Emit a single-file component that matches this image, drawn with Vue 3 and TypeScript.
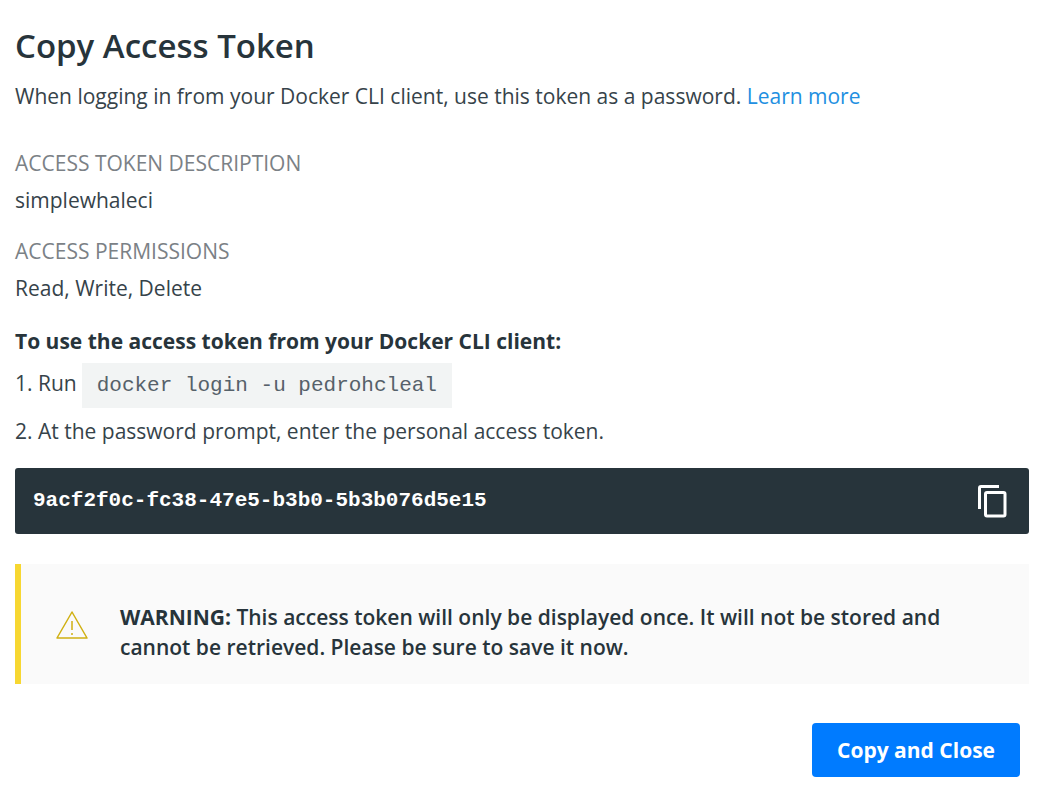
<script setup lang="ts">
import { ref } from 'vue'

const token = ref('9acf2f0c-fc38-47e5-b3b0-5b3b076d5e15')
const details = [
  { label: 'ACCESS TOKEN DESCRIPTION', value: 'simplewhaleci' },
  { label: 'ACCESS PERMISSIONS', value: 'Read, Write, Delete' },
]

function copyToken(): void {
  navigator.clipboard?.writeText(token.value)
}
</script>

<template>
  <main class="dialog">
    <h1>Copy Access Token</h1>
    <p class="intro">When logging in from your Docker CLI client, use this token as a password. <a href="#">Learn more</a></p>
    <dl class="details">
      <div v-for="item in details" :key="item.label" class="detail">
        <dt>{{ item.label }}</dt>
        <dd>{{ item.value }}</dd>
      </div>
    </dl>
    <h2>To use the access token from your Docker CLI client:</h2>
    <p class="run"><span>1. Run</span><code>docker login -u pedrohcleal</code></p>
    <p class="prompt">2. At the password prompt, enter the personal access token.</p>
    <div class="token">
      <code>{{ token }}</code>
      <button class="copy" type="button" aria-label="Copy token" @click="copyToken">
        <svg viewBox="0 0 30 34" width="30" height="34" fill="none" stroke="#fff" stroke-width="3">
          <path d="M2.5 25V4Q2.5 2.5 4 2.5H22" />
          <rect x="8.5" y="8.5" width="19.5" height="23.5" rx="1.5" />
        </svg>
      </button>
    </div>
    <div class="warning" role="note">
      <svg viewBox="0 0 32 28" width="32" height="28" fill="none" stroke="#d0b012" stroke-width="1.5">
        <path d="M16 1L31 27H1Z" stroke-linejoin="round" />
        <path d="M16 10V19M16 22V24" />
      </svg>
      <p><b>WARNING:</b> This access token will only be displayed once. It will not be stored and cannot be retrieved. Please be sure to save it now.</p>
    </div>
    <footer>
      <button class="primary" type="button" @click="copyToken">Copy and Close</button>
    </footer>
  </main>
</template>

<style>
body {
  background: #fff;
}
</style>

<style scoped>
.dialog {
  padding: 24px 25px 24px 15px;
  font: 400 21px/30px "Open Sans", sans-serif;
  color: #36434a;
}
h1, h2, p, dl, dd {
  margin: 0;
}
h1 {
  font-size: 33px;
  line-height: 44px;
  font-weight: 600;
  color: #27343b;
}
.intro {
  margin-top: 13px;
}
a {
  color: #228fe1;
  text-decoration: none;
}
.details {
  display: grid;
  gap: 21px;
  margin-top: 37px;
}
.detail {
  display: grid;
  gap: 7px;
}
dt {
  color: #7b8186;
}
h2 {
  margin-top: 23px;
  font-size: 21px;
  line-height: 30px;
  font-weight: 700;
  color: #27343b;
}
.run {
  display: flex;
  align-items: baseline;
  gap: 5px;
  margin-top: 7px;
}
.run code {
  padding: 8px 15px 7px;
  background: #f2f4f4;
  color: #56616a;
  font: 21px/30px "Liberation Mono", monospace;
}
.prompt {
  margin-top: 8px;
}
.token {
  display: flex;
  align-items: center;
  justify-content: space-between;
  margin-top: 22px;
  padding: 16px 22px 16px 18px;
  border-radius: 3px;
  background: #27343b;
  color: #fff;
}
.token code {
  font: 700 21px/30px "Liberation Mono", monospace;
}
button {
  border: 0;
  cursor: pointer;
}
.copy {
  display: flex;
  padding: 0;
  background: none;
}
.warning {
  display: flex;
  align-items: flex-start;
  gap: 32px;
  margin-top: 30px;
  padding: 38px 60px 22px 35px;
  border-left: 6px solid #f7d731;
  background: #fafafa;
  color: #27343b;
  font-weight: 600;
}
.warning b {
  font-weight: 700;
}
.warning svg {
  flex: none;
  margin-top: 9px;
}
footer {
  display: flex;
  justify-content: flex-end;
  margin-top: 39px;
  padding-right: 9px;
}
.primary {
  padding: 12px 25px;
  border-radius: 4px;
  background: #007bff;
  color: #fff;
  font: 700 21px/30px "Open Sans", sans-serif;
}
</style>
